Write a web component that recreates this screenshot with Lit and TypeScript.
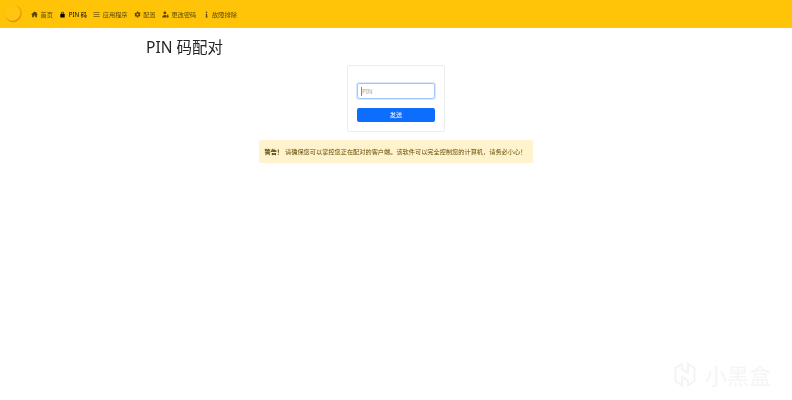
import { LitElement, html, css, svg } from "lit";
import { customElement } from "lit/decorators.js";

const icons = {
  home: svg`<path d="M8 1 0.6 7.600l.8.9L2.500 7.600V14h4v-4h3v4h4V7.600l1.100.9.8-.9L12.500 4.900V2h-2v1.100z"/>`,
  lock: svg`<path d="M5 6V4.500a3 3 0 0 1 6 0V6h-1.500V4.500a1.500 1.500 0 0 0-3 0V6z"/><rect x="3" y="6" width="10" height="9" rx="1"/>`,
  list: svg`<path d="M1 3h14v1.700H1zM1 7.200h14v1.700H1zM1 11.400h14v1.700H1z" opacity=".85"/>`,
  gear: svg`<path fill-rule="evenodd" d="M6.500 1h3l.4 2 1.500.8 1.900-.7 1.500 2.600-1.500 1.300v1.800l1.500 1.300-1.500 2.600-1.900-.7-1.500.8-.4 2h-3l-.4-2-1.500-.8-1.900.7L1.200 11.100l1.500-1.300V8L1.200 6.700l1.500-2.600 1.900.7 1.500-.8zM8 5.800a2.300 2.300 0 1 0 0 4.600 2.300 2.300 0 0 0 0-4.600z"/>`,
  user: svg`<circle cx="6.500" cy="4.500" r="3.200"/><path d="M0.500 15c0-3.500 2.500-6 6-6 1.500 0 2.600.4 3.500 1.100V15z"/><path d="M10.800 10h4.200v5h-4.200zM12 10V8.800a1 1 0 0 1 2 0V10" />`,
  info: svg`<circle cx="8" cy="2.600" r="1.700"/><path d="M5.800 6h3.700v7.200h1.200V15H5.600v-1.800h1.300V7.800H5.800z"/>`,
};

const nav: [keyof typeof icons, string, boolean][] = [
  ["home", "首页", false],
  ["lock", "PIN 码", true],
  ["list", "应用程序", false],
  ["gear", "配置", false],
  ["user", "更改密码", false],
  ["info", "故障排除", false],
];

@customElement("app-root")
export class AppRoot extends LitElement {
  static styles = css`
    :host {
      display: block;
      position: relative;
      width: 792px;
      height: 400px;
      overflow: hidden;
      background: #fff;
      font-family: "Noto Sans", "Noto Sans CJK SC", sans-serif;
      color: #212529;
    }
    .navbar {
      height: 28px;
      background: #ffc408;
      display: flex;
      align-items: center;
      padding-left: 4px;
    }
    .logo { width: 20px; height: 20px; margin-right: 7px; flex: none; }
    .item {
      display: flex;
      align-items: center;
      gap: 2.500px;
      font-size: 6.200px;
      color: rgba(0, 0, 0, 0.66);
      margin-right: 6.300px;
      white-space: nowrap;
      filter: blur(0.3px);
    }
    .item.active { color: #000; }
    .item svg { width: 7px; height: 7px; fill: currentColor; flex: none; }
    .main {
      width: 500px;
      margin: 0 auto;
      padding-top: 9px;
      display: flex;
      flex-direction: column;
    }
    h1 {
      margin: 0 0 7px;
      font-size: 15.500px;
      line-height: 21px;
      font-weight: 400;
      filter: blur(0.2px);
    }
    .card {
      align-self: center;
      box-sizing: border-box;
      width: 98px;
      height: 67px;
      margin-bottom: 8px;
      padding: 17px 9px 0;
      border: 1px solid #eaecee;
      border-radius: 1.500px;
      display: flex;
      flex-direction: column;
      gap: 8.500px;
    }
    .pin {
      box-sizing: border-box;
      width: 100%;
      height: 16px;
      padding: 0 4px;
      border: 1px solid #9fc5fb;
      border-radius: 2.500px;
      box-shadow: 0 0 0 1px rgba(13, 110, 253, 0.16);
      font: 6.200px "Noto Sans", sans-serif;
      outline: none;
      background: linear-gradient(#555, #555) 3px center / 0.7px 9px no-repeat #fff;
    }
    .pin::placeholder { color: #a2a7ac; }
    .send {
      height: 14.500px;
      padding: 0;
      border: 0;
      border-radius: 2px;
      background: #0d6efd;
      color: #fff;
      font: 6.200px "Noto Sans", "Noto Sans CJK SC", sans-serif;
    }
    .send span { filter: blur(0.3px); display: inline-block; }
    .alert {
      align-self: center;
      box-sizing: border-box;
      width: 274px;
      height: 23px;
      display: flex;
      align-items: center;
      gap: 2px;
      padding: 0 5.500px;
      background: #fff3cd;
      border-radius: 1.500px;
      color: #664d03;
      font-size: 6.200px;
      white-space: nowrap;
    }
    .alert > * { filter: blur(0.3px); }
    .alert b { color: #523e02; }
    .mark {
      position: absolute;
      right: 21px;
      bottom: 9px;
      display: flex;
      align-items: center;
      gap: 8px;
      color: #f5f5f5;
      font-size: 22px;
      line-height: 30px;
    }
    .mark svg { width: 24px; height: 32px; fill: none; stroke: #f4f4f4; stroke-width: 2.500; }
  `;

  render() {
    return html`
      <nav class="navbar">
        <svg class="logo" viewBox="0 0 20 20">
          <defs>
            <linearGradient id="g" x1="1" y1="0" x2="0" y2="1">
              <stop offset="0" stop-color="#f9a80c" />
              <stop offset="0.6" stop-color="#f08a14" />
              <stop offset="1" stop-color="#ef7a1a" />
            </linearGradient>
          </defs>
          <circle cx="9.500" cy="10" r="7.500" fill="#ffd030" opacity="0.18" />
          <path fill="url(#g)" d="M11 1c4.500 1 7 4.500 6.800 8.500-.3 5-4.400 9-9 8.700C5.300 18 2.800 15.800 1.800 12.500c1.500 2.900 4.200 4.700 7 4.400 4-.4 7-3.800 7.400-7.400C16.500 6 14.600 2.800 11 1z" />
        </svg>
        ${nav.map(
          ([icon, label, active]) => html`
            <span class="item ${active ? "active" : ""}">
              <svg viewBox="0 0 16 16">${icons[icon]}</svg>${label}
            </span>
          `
        )}
      </nav>
      <main class="main">
        <h1>PIN 码配对</h1>
        <div class="card">
          <input class="pin" placeholder="PIN" />
          <button class="send"><span>发送</span></button>
        </div>
        <div class="alert">
          <b>警告！</b>
          <span>请确保您可以掌控您正在配对的客户端。该软件可以完全控制您的计算机，请务必小心！</span>
        </div>
      </main>
      <div class="mark">
        <svg viewBox="0 0 29 33">
          <path d="M11 3 3 8v16l8 5V19l7 4v6l8-5V8l-8-5v11l-7-4z" />
        </svg>
        <span>小黑盒</span>
      </div>
    `;
  }
}
